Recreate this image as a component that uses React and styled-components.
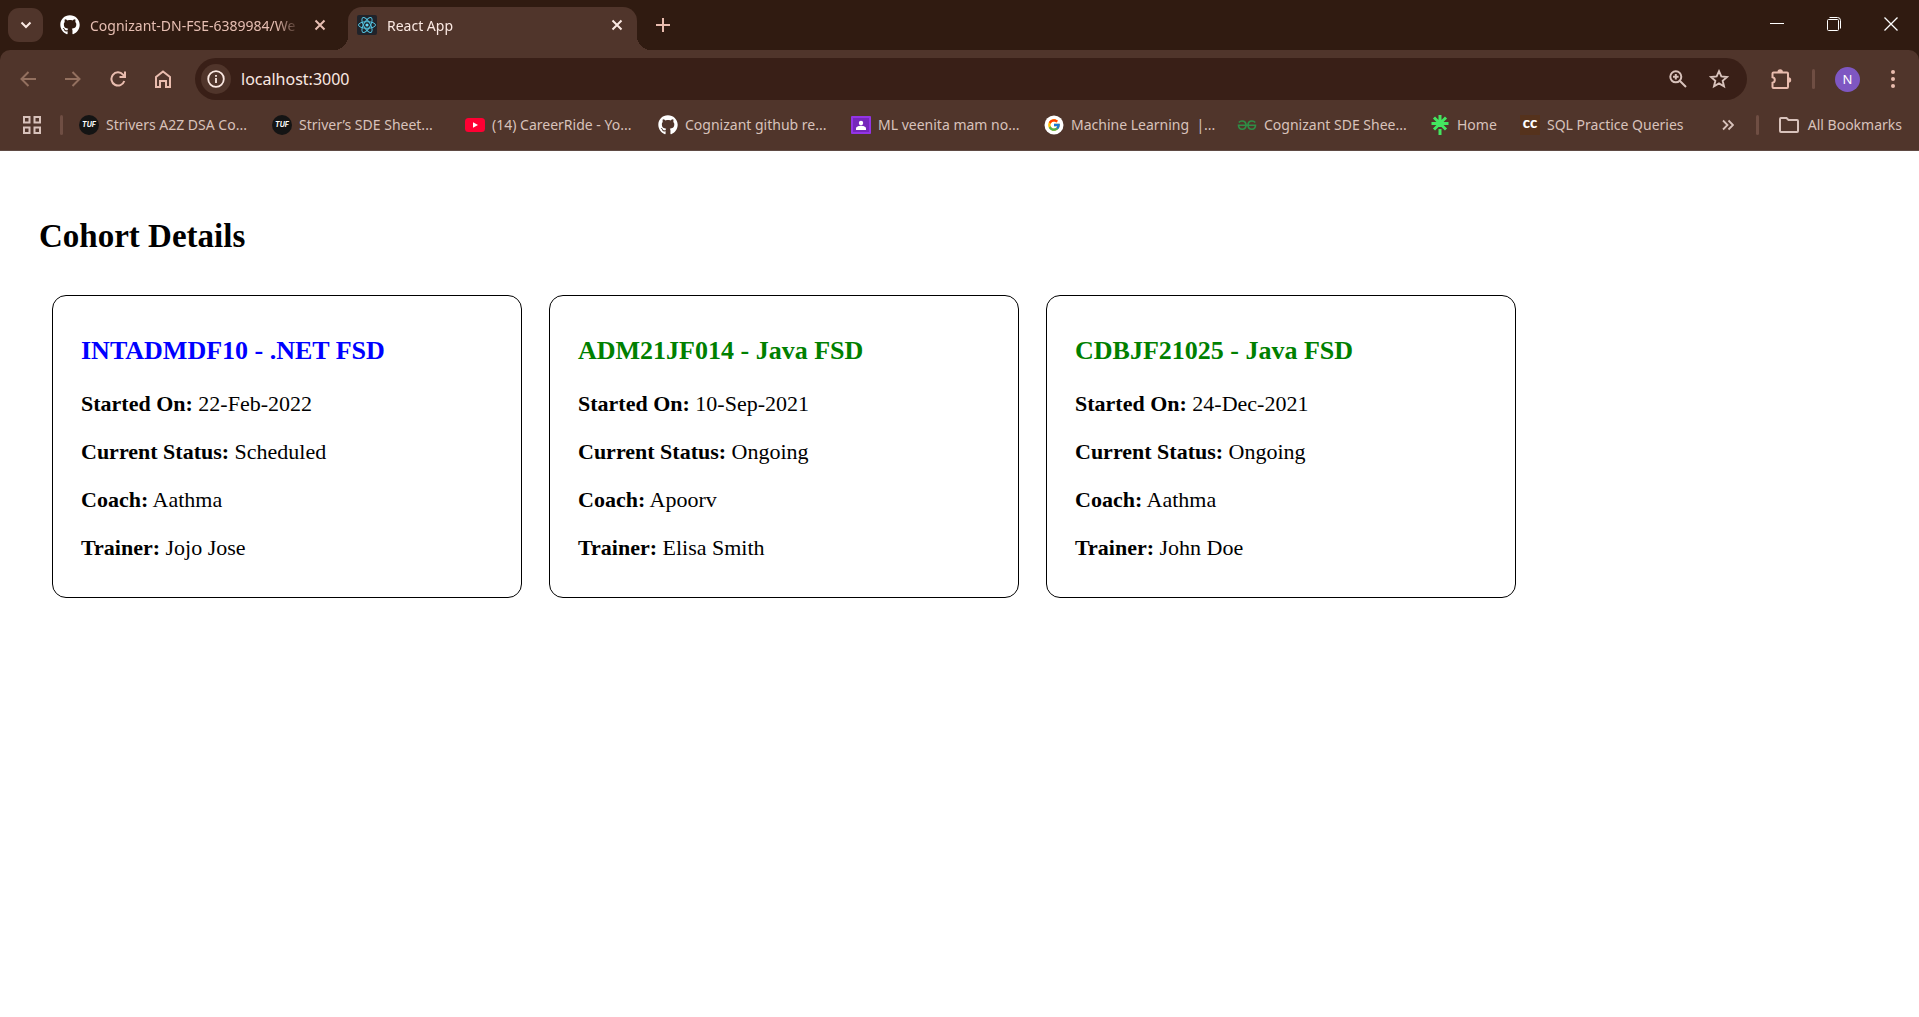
import React from "react";
import styled, { createGlobalStyle } from "styled-components";
import { FaGithub } from "react-icons/fa";
import { FcGoogle } from "react-icons/fc";

const colors = {
  strip: "#301b11",
  toolbar: "#50352b",
  field: "#391f17",
  text: "#e6beb2",
  bright: "#fbe9e3",
  soft: "#d8c2bb",
  accent: "#e9bcae",
  divider: "#6f4e43",
};

const GlobalStyle = createGlobalStyle`
  *, *::before, *::after { box-sizing: border-box; }
  body {
    margin: 0;
    background: #fff;
    color: #000;
    font-family: "Liberation Serif", "Times New Roman", serif;
  }
  button { border: 0; padding: 0; background: none; color: inherit; font: inherit; }
  svg { display: block; flex: none; }
`;

const Browser = styled.header`
  background: ${colors.strip};
  color: ${colors.text};
  font-family: "Noto Sans", "Open Sans", sans-serif;
  font-size: 14px;
`;

const TabStrip = styled.div`
  display: flex;
  height: 50px;
  padding-left: 8px;
`;

const TabSearch = styled.button`
  display: grid;
  place-items: center;
  width: 35px;
  height: 34px;
  margin-top: 8px;
  border-radius: 11px;
  background: ${colors.toolbar};
  color: ${colors.bright};
`;

const Tab = styled.div`
  position: relative;
  display: flex;
  align-items: center;
  width: ${(p) => (p.$active ? 289 : 297)}px;
  height: 43px;
  margin-top: 7px;
  padding: 0 10px 7px ${(p) => (p.$active ? 9 : 17)}px;
  border-radius: 14px 14px 0 0;
  background: ${(p) => (p.$active ? colors.toolbar : "transparent")};
  color: ${(p) => (p.$active ? colors.bright : colors.text)};
  ${(p) => !p.$active && "margin-right: 8px;"}

  &::before, &::after {
    content: "";
    display: ${(p) => (p.$active ? "block" : "none")};
    position: absolute;
    bottom: 0;
    width: 14px;
    height: 14px;
  }
  &::before {
    left: -14px;
    background: radial-gradient(circle at 0 0, transparent 14px, ${colors.toolbar} 14px);
  }
  &::after {
    right: -14px;
    background: radial-gradient(circle at 100% 0, transparent 14px, ${colors.toolbar} 14px);
  }
`;

const TabTitle = styled.button`
  display: flex;
  flex: 1;
  align-items: center;
  gap: 10px;
  min-width: 0;
`;

const TabText = styled.span`
  flex: 1;
  overflow: hidden;
  text-align: left;
  white-space: nowrap;
  mask-image: linear-gradient(to left, transparent, #000 24px);
`;

const TabClose = styled.button`
  display: grid;
  place-items: center;
  width: 20px;
  height: 20px;
  margin-left: 10px;
`;

const NewTab = styled.button`
  display: grid;
  place-items: center;
  width: 36px;
  margin-left: 8px;
  color: ${colors.accent};
`;

const WindowControls = styled.div`
  display: flex;
  margin-left: auto;
  color: #fff;
`;

const WindowButton = styled.button`
  display: grid;
  place-items: center;
  width: 57px;
  height: 48px;
`;

const Toolbar = styled.div`
  padding: 8px 0 0;
  border-bottom: 1px solid #5f4a43;
  border-radius: 10px 10px 0 0;
  background: ${colors.toolbar};
`;

const Navigation = styled.div`
  display: flex;
  align-items: center;
  height: 42px;
  padding: 0 4px 0 5px;
`;

const NavButton = styled.button`
  display: grid;
  place-items: center;
  width: 45px;
  height: 42px;
  color: ${(p) => (p.disabled ? "#93705f" : colors.accent)};
`;

const AddressBar = styled.div`
  display: flex;
  flex: 1;
  align-items: center;
  height: 42px;
  margin: 0 11px 0 10px;
  padding: 0 8px 0 6px;
  border-radius: 21px;
  background: ${colors.field};
  color: ${colors.soft};
`;

const SiteInfo = styled.button`
  display: grid;
  place-items: center;
  width: 30px;
  height: 30px;
  border-radius: 50%;
  background: ${colors.toolbar};
  color: ${colors.bright};
`;

const Address = styled.input`
  flex: 1;
  min-width: 0;
  padding: 0 0 0 10px;
  border: 0;
  background: none;
  color: ${colors.bright};
  font: 16px "Noto Sans", "Open Sans", sans-serif;
`;

const FieldButton = styled.button`
  display: grid;
  place-items: center;
  width: 41px;
  height: 34px;
`;

const Divider = styled.span`
  flex: none;
  width: 3px;
  height: 20px;
  border-radius: 2px;
  background: ${colors.divider};
`;

const ProfileArea = styled.div`
  display: flex;
  align-items: center;
  gap: 20px;
  padding: 0 10px 0 9px;
`;

const Avatar = styled.button`
  width: 25px;
  height: 25px;
  border-radius: 50%;
  background: #7e57c2;
  color: #fff;
  font-size: 13px;
  line-height: 25px;
  text-align: center;
`;

const Bookmarks = styled.nav`
  display: flex;
  align-items: center;
  height: 50px;
  padding: 0 17px 0 12px;
  color: ${colors.soft};
`;

const AppsButton = styled.button`
  display: grid;
  place-items: center;
  width: 40px;
  height: 30px;
  margin-right: 8px;
`;

const BookmarkList = styled.ul`
  display: flex;
  flex: 1;
  min-width: 0;
  margin: 0 0 0 16px;
  padding: 0;
  list-style: none;
`;

const BookmarkItem = styled.li`
  flex: none;
  width: ${(p) => (p.$short ? 90 : 193)}px;
`;

const BookmarkLink = styled.a`
  display: flex;
  align-items: center;
  gap: 7px;
  color: inherit;
  font-size: 14px;
  line-height: 20px;
  text-decoration: none;
  white-space: pre;
`;

const OverflowButton = styled.button`
  display: grid;
  place-items: center;
  width: 24px;
  height: 24px;
  margin-right: 16px;
`;

const AllBookmarks = styled.button`
  display: flex;
  align-items: center;
  gap: 9px;
  margin-left: 20px;
  font-size: 14px;
  line-height: 20px;
  white-space: nowrap;
`;

const TextBadge = styled.span`
  display: grid;
  place-items: center;
  width: 20px;
  height: 20px;
  border-radius: ${(p) => (p.$round ? "50%" : "0")};
  background: ${(p) => p.$bg};
  color: #fff;
  font-family: ${(p) => (p.$round ? "Inter" : "Lato")}, sans-serif;
  font-size: ${(p) => (p.$round ? 7 : 15)}px;
  font-style: ${(p) => (p.$round ? "italic" : "normal")};
  font-weight: ${(p) => (p.$round ? 700 : 900)};
  line-height: ${(p) => (p.$round ? 20 : 14)}px;
`;

const BadgeText = styled.span`
  height: 20px;
`;

const Page = styled.main`
  padding: 66px 39px;
`;

const PageTitle = styled.h1`
  margin: 0 0 40px;
  font-size: 33px;
  line-height: 38px;
`;

const CardList = styled.div`
  display: flex;
  flex-wrap: wrap;
  gap: 27px;
  padding-left: 13px;
`;

const Card = styled.article`
  width: 470px;
  padding: 40px 28px 36px;
  border: 1px solid #000;
  border-radius: 14px;
`;

const CardTitle = styled.h2`
  margin: 0 0 25px;
  color: ${(p) => p.$color};
  font-size: 26px;
  line-height: 30px;
`;

const Fields = styled.div`
  display: flex;
  flex-direction: column;
  gap: 22px;
`;

const Field = styled.p`
  margin: 0;
  font-size: 22px;
  line-height: 26px;
`;

const Stroke = ({ size = 20, width = 2, box = 20, children, ...rest }) => (
  <svg width={size} height={size} viewBox={`0 0 ${box} ${box}`} fill="none" stroke="currentColor" strokeWidth={width} aria-hidden="true" {...rest}>
    {children}
  </svg>
);

const Cross = () => (
  <Stroke size={12} box={12}><path d="M1.500 1.500l9 9M10.500 1.500l-9 9" /></Stroke>
);

const ReactIcon = () => (
  <svg width="20" height="20" viewBox="0 0 20 20" fill="none" stroke="#53c1de" strokeWidth="1" aria-hidden="true">
    <rect width="20" height="20" rx="2" fill="#20232a" stroke="none" />
    <circle cx="10" cy="10" r="1.6" fill="#61dafb" stroke="none" />
    {[0, 60, 120].map((a) => (
      <ellipse key={a} cx="10" cy="10" rx="8.5" ry="3.3" transform={`rotate(${a} 10 10)`} />
    ))}
  </svg>
);

const TufIcon = () => <TextBadge $round $bg="#141414" aria-hidden="true"><BadgeText>TUF</BadgeText></TextBadge>;

const YoutubeIcon = () => (
  <svg width="20" height="20" viewBox="0 0 20 20" aria-hidden="true">
    <rect y="3" width="20" height="14" rx="3.5" fill="#ff0033" />
    <path d="M8 7.2l5 2.8-5 2.8z" fill="#fff" />
  </svg>
);

const ClassroomIcon = () => (
  <svg width="20" height="20" viewBox="0 0 20 20" aria-hidden="true">
    <rect y="1" width="20" height="18" rx="1" fill="#9334e6" />
    <rect x="2" y="3" width="16" height="14" fill="#7627bb" />
    <circle cx="10" cy="8" r="2.2" fill="#fff" />
    <path d="M5 15v-1.500c0-2 3-2.800 5-2.800s5 .8 5 2.800V15z" fill="#fff" />
  </svg>
);

const GoogleIcon = () => (
  <svg width="20" height="20" viewBox="0 0 20 20" aria-hidden="true">
    <circle cx="10" cy="10" r="9.500" fill="#fff" />
    <FcGoogle x="3" y="3" size={14} />
  </svg>
);

const GeeksIcon = () => (
  <Stroke stroke="#2f8d46" width="1.600">
    <path d="M1.800 7.500Q3 6 5 6Q9 6 9 10.300Q9 14.200 5.200 14.200Q1.600 14.200 1.500 10.300H18.500Q18.400 14.200 14.800 14.200Q11 14.200 11 10.300Q11 6 15 6Q17 6 18.200 7.500" />
  </Stroke>
);

const LinktreeIcon = () => (
  <Stroke stroke="#43e660" width="3">
    <path d="M10 0v12M10 14v6M1.500 8.500h17M4 2.500l12 12M16 2.500l-12 12" />
  </Stroke>
);

const CcIcon = () => <TextBadge $bg="#55321c" aria-hidden="true"><BadgeText>cc</BadgeText></TextBadge>;

const GithubIcon = () => <FaGithub size={20} color="#fff" aria-hidden="true" />;

const bookmarks = [
  { icon: TufIcon, label: "Strivers A2Z DSA Co..." },
  { icon: TufIcon, label: "Striver’s SDE Sheet..." },
  { icon: YoutubeIcon, label: "(14) CareerRide - Yo..." },
  { icon: GithubIcon, label: "Cognizant github re..." },
  { icon: ClassroomIcon, label: "ML veenita mam no..." },
  { icon: GoogleIcon, label: "Machine Learning  |..." },
  { icon: GeeksIcon, label: "Cognizant SDE Shee..." },
  { icon: LinktreeIcon, label: "Home", short: true },
  { icon: CcIcon, label: "SQL Practice Queries" },
];

const cohorts = [
  { code: "INTADMDF10", track: ".NET FSD", started: "22-Feb-2022", status: "Scheduled", coach: "Aathma", trainer: "Jojo Jose" },
  { code: "ADM21JF014", track: "Java FSD", started: "10-Sep-2021", status: "Ongoing", coach: "Apoorv", trainer: "Elisa Smith" },
  { code: "CDBJF21025", track: "Java FSD", started: "24-Dec-2021", status: "Ongoing", coach: "Aathma", trainer: "John Doe" },
];

function BrowserTab({ icon, title, active }) {
  return (
    <Tab $active={active}>
      <TabTitle role="tab" aria-selected={!!active}>
        {icon}
        <TabText>{title}</TabText>
      </TabTitle>
      <TabClose aria-label="Close tab"><Cross /></TabClose>
    </Tab>
  );
}

function BrowserChrome() {
  return (
    <Browser>
      <TabStrip>
        <TabSearch aria-label="Search tabs">
          <Stroke size={12} box={12}><path d="M1.500 3.500L6 8l4.500-4.500" /></Stroke>
        </TabSearch>
        <BrowserTab icon={<GithubIcon />} title="Cognizant-DN-FSE-6389984/We" />
        <BrowserTab icon={<ReactIcon />} title="React App" active />
        <NewTab aria-label="New tab">
          <Stroke size={14} box={14}><path d="M7 0v14M0 7h14" /></Stroke>
        </NewTab>
        <WindowControls>
          <WindowButton aria-label="Minimize">
            <Stroke size={14} box={14} width={1}><path d="M0 6.500h14" /></Stroke>
          </WindowButton>
          <WindowButton aria-label="Restore">
            <Stroke size={14} box={14} width={1}>
              <rect x=".5" y="2.500" width="11" height="11" rx="1" />
              <path d="M2.500.5h8q3 0 3 3v8" />
            </Stroke>
          </WindowButton>
          <WindowButton aria-label="Close">
            <Stroke size={14} box={14} width={1.3}><path d="M.5.5l13 13M13.500.5l-13 13" /></Stroke>
          </WindowButton>
        </WindowControls>
      </TabStrip>

      <Toolbar>
        <Navigation>
          <NavButton disabled aria-label="Back">
            <Stroke size={16} box={16}><path d="M16 8H2M8.500 1L1.500 8l7 7" /></Stroke>
          </NavButton>
          <NavButton disabled aria-label="Forward">
            <Stroke size={16} box={16}><path d="M0 8h14M7.500 1l7 7-7 7" /></Stroke>
          </NavButton>
          <NavButton aria-label="Reload">
            <Stroke size={16} box={16}><path d="M14.300 10A6.600 6.600 0 1 1 13 3.600L14.500 5.500M15 .5V6H9.500" /></Stroke>
          </NavButton>
          <NavButton aria-label="Home">
            <Stroke size={18} box={18}><path d="M2 17V7l7-5.500L16 7v10h-4v-6H6v6z" /></Stroke>
          </NavButton>
          <AddressBar>
            <SiteInfo aria-label="View site information">
              <Stroke size={18} box={18} width={1.8}>
                <circle cx="9" cy="9" r="7.800" />
                <path d="M9 8v5M9 5v1.800" />
              </Stroke>
            </SiteInfo>
            <Address aria-label="Address" defaultValue="localhost:3000" />
            <FieldButton aria-label="Zoom">
              <Stroke size={18} box={18}>
                <circle cx="6.800" cy="6.800" r="5.500" />
                <path d="M11 11l6 6M6.800 4v5.600M4 6.800h5.600" />
              </Stroke>
            </FieldButton>
            <FieldButton aria-label="Bookmark this page">
              <Stroke size={20} box={18} width={1.7}>
                <path d="M9 2l2.100 4.700 5.100.5-3.900 3.400 1.200 5L9 13l-4.500 2.600 1.200-5-3.900-3.400 5.100-.5z" />
              </Stroke>
            </FieldButton>
          </AddressBar>
          <NavButton aria-label="Extensions">
            <Stroke size={22} box={22}>
              <path d="M3.500 4.500H17q1 0 1 1V19q0 1-1 1H3.500q-1 0-1-1v-4.300q2.300-.5 2.300-2.700t-2.300-2.700V5.500q0-1 1-1z" />
              <path d="M7.500 4a2.700 2.700 0 0 1 5.400 0zM18.500 9.300a2.700 2.700 0 0 1 0 5.400z" fill="currentColor" stroke="none" />
            </Stroke>
          </NavButton>
          <ProfileArea>
            <Divider />
            <Avatar aria-label="Profile">N</Avatar>
          </ProfileArea>
          <NavButton aria-label="Menu">
            <svg width="4" height="18" viewBox="0 0 4 18" fill="currentColor" aria-hidden="true">
              <circle cx="2" cy="2" r="2" /><circle cx="2" cy="9" r="2" /><circle cx="2" cy="16" r="2" />
            </svg>
          </NavButton>
        </Navigation>

        <Bookmarks aria-label="Bookmarks">
          <AppsButton aria-label="Tab groups">
            <Stroke size={18} box={18}>
              <path d="M1 1h5.500v5.500H1zM11.500 1H17v5.500h-5.500zM1 11.500h5.500V17H1zM11.500 11.500H17V17h-5.500z" />
            </Stroke>
          </AppsButton>
          <Divider />
          <BookmarkList>
            {bookmarks.map(({ icon: Icon, label, short }) => (
              <BookmarkItem key={label} $short={short}>
                <BookmarkLink href="#"><Icon />{label}</BookmarkLink>
              </BookmarkItem>
            ))}
          </BookmarkList>
          <OverflowButton aria-label="More bookmarks">
            <Stroke size={12} box={12} width={1.8}><path d="M1 1.500L5.500 6 1 10.500M6.500 1.500L11 6l-4.500 4.500" /></Stroke>
          </OverflowButton>
          <Divider />
          <AllBookmarks>
            <svg width="20" height="16" viewBox="0 0 20 16" fill="none" stroke="currentColor" strokeWidth="2" aria-hidden="true">
              <path d="M2 1h5.500l2 2H18q1 0 1 1v10q0 1-1 1H2q-1 0-1-1V2q0-1 1-1z" />
            </svg>
            All Bookmarks
          </AllBookmarks>
        </Bookmarks>
      </Toolbar>
    </Browser>
  );
}

function CohortCard({ cohort }) {
  return (
    <Card>
      <CardTitle $color={cohort.status === "Ongoing" ? "green" : "blue"}>
        {cohort.code} - {cohort.track}
      </CardTitle>
      <Fields>
        <Field><strong>Started On:</strong> {cohort.started}</Field>
        <Field><strong>Current Status:</strong> {cohort.status}</Field>
        <Field><strong>Coach:</strong> {cohort.coach}</Field>
        <Field><strong>Trainer:</strong> {cohort.trainer}</Field>
      </Fields>
    </Card>
  );
}

export default function App() {
  return (
    <>
      <GlobalStyle />
      <BrowserChrome />
      <Page>
        <PageTitle>Cohort Details</PageTitle>
        <CardList>
          {cohorts.map((cohort) => <CohortCard key={cohort.code} cohort={cohort} />)}
        </CardList>
      </Page>
    </>
  );
}
